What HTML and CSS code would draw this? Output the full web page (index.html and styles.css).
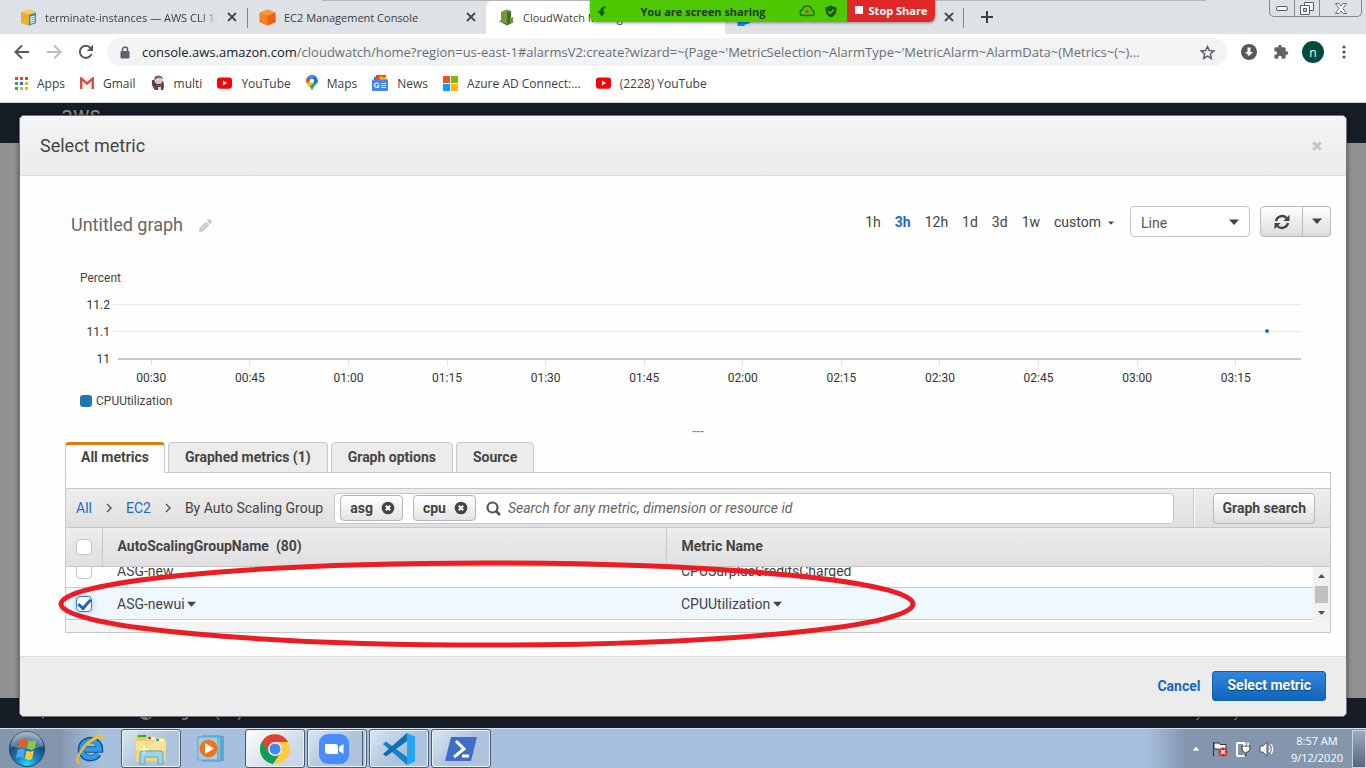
FILE: index.html
```html
<!DOCTYPE html>
<html lang="en">
<head>
<meta charset="utf-8">
<title>CloudWatch Management Console</title>
<link rel="stylesheet" href="styles.css">
</head>
<body>
<svg class="defs" aria-hidden="true">
  <symbol id="x" viewBox="0 0 10 10"><path d="M1 1l8 8M9 1l-8 8" stroke="#45494d" stroke-width="1.8"/></symbol>
  <symbol id="yt" viewBox="0 0 16 12"><rect width="16" height="12" rx="3" fill="#f00"/><path d="M6.3 3.4v5.2L10.8 6z" fill="#fff"/></symbol>
  <symbol id="caret" viewBox="0 0 10 6"><path d="M0 .5h10L5 6z" fill="#444"/></symbol>
  <symbol id="remove" viewBox="0 0 14 14"><circle cx="7" cy="7" r="6.3" fill="#444"/><path d="M4.8 4.8l4.4 4.4M9.2 4.8L4.800 9.200" stroke="#fff" stroke-width="2"/></symbol>
</svg>

<header class="browser">
  <div class="tabstrip">
    <div class="tab">
      <svg class="fav" width="17" height="17" viewBox="0 0 17 17"><path d="M1 3l8-2.500L16 3v11l-7 2.500L1 14z" fill="#f2a32b"/><path d="M1 3l8 2v11.500L1 14z" fill="#e8b12e"/><path d="M1 3l8-2.500L16 3 9 5z" fill="#f9cf5a"/><path d="M9 6l7-2v10l-7 2.500z" fill="#2d8ac7"/><path d="M10.500 7.500l4-1v7l-4 1.200z" fill="#fff"/><path d="M11.300 9l2.400-.6M11.300 11l2.400-.6M11.300 13l2.400-.6" stroke="#2d8ac7"/></svg>
      <span class="tab-title fade">terminate-instances — AWS CLI 1.18</span>
      <button class="tab-close" aria-label="Close tab"><svg width="10" height="10"><use href="#x"/></svg></button>
    </div>
    <div class="tab tab-sep">
      <svg class="fav" width="17" height="17" viewBox="0 0 17 17"><path d="M8.500.5l8 3.200v9.600l-8 3.200-8-3.200V3.700z" fill="#f58220"/><path d="M.5 3.700l8-3.200 8 3.200-8 3z" fill="#fb9b2f"/><path d="M8.500 6.700l8-3v9.600l-8 3.200z" fill="#e8621b"/></svg>
      <span class="tab-title">EC2 Management Console</span>
      <button class="tab-close" aria-label="Close tab"><svg width="10" height="10"><use href="#x"/></svg></button>
    </div>
    <div class="tab tab-active">
      <svg class="fav" width="17" height="17" viewBox="0 0 17 17"><path d="M1 12l7-2 8 3-7 3.500z" fill="#4b6b2c"/><path d="M3 3l3-1.500L9 3v10l-3 1.500L3 13z" fill="#6d9a41"/><path d="M6 1.500L9 .5l4 1.500v11l-4 2-3-1.500z" fill="#759c3e"/><path d="M9 3l4-1v11l-4 2z" fill="#4b6b2c"/><path d="M12 9l3-.8v4.800l-3 1.200z" fill="#6d9a41"/></svg>
      <span class="tab-title">CloudWatch Management Console</span>
    </div>
    <div class="tab tab-last">
      <svg class="fav" width="17" height="17" viewBox="0 0 17 17"><path d="M8.500 3a5.500 5.500 0 1 1-1 11M2 13h4v3H2z" fill="none" stroke="#0a84ff" stroke-width="3"/></svg>
      <span class="tab-title"></span>
      <button class="tab-close" aria-label="Close tab"><svg width="10" height="10"><use href="#x"/></svg></button>
    </div>
    <button class="new-tab" aria-label="New tab"><svg width="12" height="12" viewBox="0 0 12 12"><path d="M6 0v12M0 6h12" stroke="#3c4043" stroke-width="2"/></svg></button>
    <div class="caption">
      <button aria-label="Minimize"><svg width="12" height="5" viewBox="0 0 12 5"><rect x=".5" y=".5" width="11" height="4" rx="1.500" fill="#fff" stroke="#5a5d61"/></svg></button>
      <button aria-label="Restore"><svg width="14" height="13" viewBox="0 0 14 13"><path d="M4.500.5h9v8h-9z" fill="#fff" stroke="#5a5d61"/><path d="M.5 3.500h9v9h-9z" fill="#fff" stroke="#5a5d61"/><path d="M3.500 6.500h3v3h-3z" fill="#ccc" stroke="#5a5d61"/></svg></button>
      <button class="cap-close" aria-label="Close"><svg width="12" height="11" viewBox="0 0 12 11"><path d="M.5.500h3.500l2 2.500 2-2.500h3.500l-3.500 5 3.500 5H8L6 8l-2 2.500H.5l3.500-5z" fill="#fff" stroke="#6a6d71"/></svg></button>
    </div>
    <div class="share-edge"></div>
    <div class="share">
      <div class="share-main">
        <svg width="10" height="11" viewBox="0 0 10 11"><path d="M9.500.5C5 .5 3 2.500 3.500 5H.5L5 10.500 8 6H6.500C6 3.500 7 2 9.500.5z" fill="#0b5a0b"/></svg>
        <span>You are screen sharing</span>
        <svg class="cloud" width="16" height="12" viewBox="0 0 16 12"><path d="M3.500 10.500a2.800 2.800 0 0 1-.3-5.500C3.700 2.500 5.500 1 8 1s4.300 1.500 4.700 3.800c3.500.7 3.300 5.700 0 5.700z" fill="none" stroke="#1c6b14" stroke-width="1.300"/><circle cx="8" cy="6.500" r="1.700" fill="#e33b2a"/></svg>
        <svg width="12" height="13" viewBox="0 0 12 13"><path d="M6 .5l5.500 2c.3 4.500-1 8-5.500 10C1.500 10.500.2 7 .5 2.500z" fill="#1d5a17"/><path d="M3.300 6.300l2 2 3.500-3.800" fill="none" stroke="#4ec800" stroke-width="1.500"/></svg>
      </div>
      <button class="share-stop"><i></i>Stop Share</button>
    </div>
  </div>

  <div class="toolbar">
    <button aria-label="Back"><svg width="16" height="16" viewBox="0 0 16 16"><path d="M15 8H2M8 1.500L1.500 8 8 14.500" fill="none" stroke="#55585c" stroke-width="2"/></svg></button>
    <button aria-label="Forward"><svg width="16" height="16" viewBox="0 0 16 16"><path d="M1 8h13M8 1.500L14.500 8 8 14.500" fill="none" stroke="#babcbe" stroke-width="2"/></svg></button>
    <button aria-label="Reload"><svg width="16" height="16" viewBox="0 0 16 16"><path d="M13.500 10A6 6 0 1 1 12.500 4" fill="none" stroke="#55585c" stroke-width="2"/><path d="M15 .8V7H8.800z" fill="#55585c"/></svg></button>
    <div class="omnibox">
      <svg width="10" height="13" viewBox="0 0 10 13"><path d="M2.500 6V3.500a2.500 2.500 0 0 1 5 0V6" fill="none" stroke="#5f6368" stroke-width="1.500"/><rect x=".5" y="5" width="9" height="7.500" rx="1" fill="#5f6368"/></svg>
      <span class="url"><b>console.aws.amazon.com</b>/cloudwatch/home?region=us-east-1#alarmsV2:create?wizard=~(Page~'MetricSelection~AlarmType~'MetricAlarm~AlarmData~(Metrics~(~)...</span>
      <button aria-label="Bookmark this tab"><svg width="15" height="15" viewBox="0 0 15 15"><path d="M7.500 1.500l1.800 4.100 4.500.4-3.400 3 1 4.400-3.900-2.300-3.900 2.300 1-4.400-3.400-3 4.500-.4z" fill="none" stroke="#5f6368" stroke-width="1.500"/></svg></button>
    </div>
    <button aria-label="Downloads"><svg width="16" height="16" viewBox="0 0 16 16"><circle cx="8" cy="8" r="8" fill="#55585c"/><path d="M6.500 3.500h3V8H12l-4 4-4-4h2.500z" fill="#fff"/></svg></button>
    <button aria-label="Extensions"><svg width="16" height="16" viewBox="0 0 24 24"><path d="M20.500 11H19V7a2 2 0 0 0-2-2h-4V3.500a2.500 2.500 0 0 0-5 0V5H4a2 2 0 0 0-2 2v3.800h1.500a2.700 2.700 0 0 1 0 5.400H2V20c0 1.100.9 2 2 2h3.800v-1.500a2.700 2.700 0 0 1 5.400 0V22H17a2 2 0 0 0 2-2v-4h1.500a2.500 2.500 0 0 0 0-5z" fill="#5f6368"/></svg></button>
    <button class="avatar">n</button>
    <button aria-label="Menu"><svg width="4" height="14" viewBox="0 0 4 14"><g fill="#55585c"><circle cx="2" cy="2" r="1.600"/><circle cx="2" cy="7" r="1.600"/><circle cx="2" cy="12" r="1.600"/></g></svg></button>
  </div>

  <nav class="bookmarks">
    <a href="#"><svg width="13" height="13" viewBox="0 0 13 13"><path d="M0 0h3v3H0zM5 0h3v3H5zM10 0h3v3h-3z" fill="#ea4335"/><path d="M0 5h3v3H0zM0 10h3v3H0z" fill="#34a853"/><path d="M5 5h3v3H5z" fill="#1a73e8"/><path d="M10 5h3v3h-3zM5 10h3v3H5zM10 10h3v3h-3z" fill="#fbaf05"/></svg>Apps</a>
    <a href="#"><svg width="14" height="12" viewBox="0 0 14 12"><path d="M0 0h14v12H0z" fill="#eceff1"/><path d="M1.200 12V1.500L7 6.500l5.800-5V12" fill="none" stroke="#db4437" stroke-width="2.300"/></svg>Gmail</a>
    <a href="#"><svg width="14" height="16" viewBox="0 0 14 16"><path d="M1 5Q0 11 4 15h8q2-4 0-9z" fill="#3b4a5c"/><circle cx="7.500" cy="5" r="4" fill="#ecc9a8"/><path d="M3 5Q3 .5 7.500.5 12 1 12 4 8 1.500 5 4z" fill="#736458"/><path d="M6 9l2 1.500 2.500-1.500v3L8 11l-2 1z" fill="#d33833"/><path d="M3 10l3 4-4-1z" fill="#d33833"/><path d="M7 12h3v3H7z" fill="#ddd"/></svg>multi</a>
    <a href="#"><svg width="15" height="12"><use href="#yt"/></svg>YouTube</a>
    <a href="#"><svg width="12" height="16" viewBox="0 0 12 16"><path d="M6 0a5.700 5.700 0 0 1 5.700 5.700C11.700 9.500 7 11 6 16 5 11 .3 9.500.3 5.700A5.700 5.700 0 0 1 6 0z" fill="#34a853"/><path d="M1.600 2L6 5.700.9 8.500Q-.6 4.500 1.600 2z" fill="#ea4335"/><path d="M1.600 2Q5-1.600 9 .9L4 7z" fill="#4285f4"/><path d="M.9 8.500L5 4l3 4-5 4z" fill="#fbbc04"/><path d="M9 .9q4 3 2.300 7L8 8 6 4z" fill="#1a73e8"/><circle cx="6" cy="5.700" r="2" fill="#fff"/></svg>Maps</a>
    <a href="#"><svg width="16" height="16" viewBox="0 0 16 16"><path d="M2 2h9v5H2z" fill="#0c9d58"/><path d="M4 0h10l-1 5H3z" fill="#ea4335"/><path d="M8 1l7 2v4H7z" fill="#fbbc04"/><rect y="4.500" width="16" height="11.500" rx="1" fill="#4285f4"/><path d="M6.800 9a2.300 2.300 0 1 0 .3 1.800H5M9.500 8.500H14M9.500 10.500H14M9.500 12.500H14" fill="none" stroke="#fff" stroke-width="1.100"/></svg>News</a>
    <a href="#"><svg width="15" height="15" viewBox="0 0 15 15"><path d="M0 0h7v7H0z" fill="#f25022"/><path d="M8 0h7v7H8z" fill="#7fba00"/><path d="M0 8h7v7H0z" fill="#00a4ef"/><path d="M8 8h7v7H8z" fill="#ffb900"/></svg>Azure AD Connect:...</a>
    <a href="#"><svg width="15" height="12"><use href="#yt"/></svg>(2228) YouTube</a>
  </nav>
</header>

<main class="page">
  <div class="backdrop">
    <div class="aws-bar"><span>aws</span></div>
    <div class="aws-body"></div>
    <div class="aws-foot">
      <svg width="13" height="16" viewBox="0 0 13 16"><path d="M0 0h12v15L6 11H0z" fill="#7b7f85"/></svg>
      <svg class="globe" width="16" height="18" viewBox="0 0 16 18"><circle cx="8" cy="9.500" r="7.500" fill="#858a8f"/><path d="M8 12l6-2-4 6z" fill="#161d27"/></svg>
      <span>English (US)</span>
      <span class="foot-right">Privacy Policy</span>
    </div>
  </div>

  <section class="dialog" role="dialog" aria-labelledby="dlg-title">
    <div class="dialog-head">
      <h1 id="dlg-title">Select metric</h1>
      <button aria-label="Close dialog"><svg width="10" height="10" viewBox="0 0 10 10"><path d="M1.300 1.300l7.400 7.400M8.700 1.300L1.300 8.700" stroke="#c6c6c6" stroke-width="3.200"/></svg></button>
    </div>

    <div class="dialog-body">
      <div class="graph-bar">
        <h2>Untitled graph</h2>
        <button class="edit" aria-label="Rename graph"><svg width="13" height="13" viewBox="0 0 13 13"><path d="M0 13l.6-4L7 2.700 10.300 6 4 12.400zM7.800 1.900L9.200.5q.9-.8 1.800 0L12.500 2q.8.900 0 1.800l-1.400 1.400z" fill="#c9c9c9"/><path d="M3.200 9.800l5-5" stroke="#e4e4e4"/></svg></button>
        <div class="ranges">
          <button>1h</button><button class="on">3h</button><button>12h</button><button>1d</button><button>3d</button><button>1w</button><button>custom <svg width="6" height="4"><use href="#caret"/></svg></button>
        </div>
        <div class="select-wrap">
          <select aria-label="Graph type"><option>Line</option></select>
          <svg width="10" height="6"><use href="#caret"/></svg>
        </div>
        <div class="split">
          <button aria-label="Refresh"><svg width="16" height="16" viewBox="0 0 16 16"><path d="M2 7a6.200 6.200 0 0 1 10.500-3M14 9a6.200 6.200 0 0 1-10.500 3" fill="none" stroke="#444" stroke-width="2.400"/><path d="M15.500.8V7H9.300zM.5 15.200V9h6.200z" fill="#444"/></svg></button>
          <button aria-label="Refresh options"><svg width="10" height="6"><use href="#caret"/></svg></button>
        </div>
      </div>

      <div class="chart">
        <div class="unit">Percent</div>
        <div class="plot">
          <div class="grid-row"><span>11.2</span><i></i></div>
          <div class="grid-row"><span>11.1</span><i><b class="point"></b></i></div>
          <div class="grid-row axis"><span>11</span><i></i></div>
        </div>
        <div class="xaxis"><span>00:30</span><span>00:45</span><span>01:00</span><span>01:15</span><span>01:30</span><span>01:45</span><span>02:00</span><span>02:15</span><span>02:30</span><span>02:45</span><span>03:00</span><span>03:15</span></div>
        <div class="legend"><i></i>CPUUtilization</div>
      </div>
      <div class="handle">---</div>

      <div class="tabs" role="tablist">
        <button class="on" role="tab" aria-selected="true">All metrics</button><button role="tab">Graphed metrics (1)</button><button role="tab">Graph options</button><button role="tab">Source</button>
      </div>

      <div class="panel">
        <div class="filter">
          <nav class="crumbs"><a href="#">All</a><svg width="6" height="10" viewBox="0 0 6 10"><path d="M1 1l4 4-4 4" fill="none" stroke="#555" stroke-width="1.400"/></svg><a href="#">EC2</a><svg width="6" height="10" viewBox="0 0 6 10"><path d="M1 1l4 4-4 4" fill="none" stroke="#555" stroke-width="1.400"/></svg><span>By Auto Scaling Group</span></nav>
          <div class="search">
            <button class="chip">asg <svg width="14" height="14"><use href="#remove"/></svg></button>
            <button class="chip">cpu <svg width="14" height="14"><use href="#remove"/></svg></button>
            <svg width="15" height="15" viewBox="0 0 15 15"><circle cx="6.500" cy="6.500" r="5" fill="none" stroke="#555" stroke-width="2.200"/><path d="M10 10l4 4" stroke="#555" stroke-width="2.600"/></svg>
            <input type="text" aria-label="Search metrics" placeholder="Search for any metric, dimension or resource id">
          </div>
          <div class="filter-end"><button class="btn">Graph search</button></div>
        </div>
        <table class="metrics metrics-head">
          <tr><th class="c-check"><input type="checkbox" aria-label="Select all"></th><th class="c-name">AutoScalingGroupName&nbsp; (80)</th><th>Metric Name</th></tr>
        </table>
        <div class="rows">
          <div class="viewport">
            <table class="metrics">
              <tr><td class="c-check"><input type="checkbox" aria-label="ASG-new"></td><td class="c-name">ASG-new</td><td>CPUSurplusCreditsCharged</td></tr>
              <tr class="picked"><td class="c-check"><input type="checkbox" checked aria-label="ASG-newui"></td><td class="c-name">ASG-newui <svg width="9" height="6"><use href="#caret"/></svg></td><td>CPUUtilization <svg width="9" height="6"><use href="#caret"/></svg></td></tr>
            </table>
          </div>
          <div class="scrollbar"><svg width="7" height="4" viewBox="0 0 7 4"><path d="M0 4h7L3.500 0z" fill="#505050"/></svg><i></i><svg width="7" height="4" viewBox="0 0 7 4"><path d="M0 0h7L3.500 4z" fill="#505050"/></svg></div>
        </div>
        <div class="panel-foot"></div>
        <svg class="marker" width="860" height="90" viewBox="0 0 860 90"><ellipse cx="430" cy="45" rx="426" ry="41" fill="none" stroke="#ed1c24" stroke-width="5"/></svg>
      </div>
    </div>

    <div class="dialog-foot">
      <button class="link">Cancel</button>
      <button class="primary">Select metric</button>
    </div>
  </section>
</main>

<footer class="taskbar">
  <button class="start" aria-label="Start"><svg width="38" height="38" viewBox="0 0 38 38"><defs><radialGradient id="orb" cx=".5" cy=".95" r=".9"><stop offset="0" stop-color="#19e0ff"/><stop offset=".35" stop-color="#1583bd"/><stop offset=".7" stop-color="#1b4d78"/><stop offset="1" stop-color="#7d9db8"/></radialGradient></defs><circle cx="19" cy="19" r="17.500" fill="url(#orb)" stroke="#24425f"/><path d="M3 16a16 15 0 0 1 32 0q-16 6-32 0z" fill="#fff" opacity=".25"/><path d="M12 10q4-3 7-.5L17.500 18q-4-2-7.500.5z" fill="#ee5a24"/><path d="M20.500 10q4 2.500 8 0L26.500 19q-4 2-7.500-.5z" fill="#8cc63e"/><path d="M9.500 20q4-2.500 7.500 0L15.500 28q-4-2-7.500.5z" fill="#48a9e6"/><path d="M18.500 20.500q4 2 7.500 0L24 29q-4 2-7-.5z" fill="#fcc732"/></svg></button>
  <button class="pin" aria-label="Internet Explorer"><svg width="34" height="34" viewBox="0 0 34 34"><path d="M25.500 22A9.500 9 0 1 1 27 17.500H12" fill="none" stroke="#164f94" stroke-width="6.500"/><path d="M25 22A9 8.500 0 1 1 26.500 17.500H12" fill="none" stroke="#2d9be6" stroke-width="4.500"/><path d="M8 31q-7 2-4-6Q9 12 20 5.500q9-5 11-2 1 2-1 5 0-4-5-2Q11 13 6 25q-2 5 2 6z" fill="#f4bd2e"/></svg></button>
  <button class="task" aria-label="File Explorer"><svg width="34" height="32" viewBox="0 0 34 32"><path d="M2 2h12l2 3h16v23H2z" fill="#e6cd68"/><path d="M4 2h8v2H4z" fill="#19b33c"/><path d="M13 4h8v3h-8z" fill="#f8f2d8"/><path d="M14 4h3v2h-3z" fill="#d33"/><path d="M21 6h9v3h-9z" fill="#fff"/><path d="M22 6h3v2h-3z" fill="#1aa0e8"/><path d="M2 8h30v20H2z" fill="#f7e391"/><path d="M2 17h30v11H2z" fill="#f0d677"/><path d="M6 31V21q0-3 3-3h17q3 0 3 3v10h-5v-7H11v7z" fill="#9bd3ee" stroke="#5fa8cd"/><path d="M10 12v9M5.500 16.500h9" stroke="#fff"/></svg></button>
  <button class="pin pin-media" aria-label="Media Player"><svg width="30" height="28" viewBox="0 0 30 28"><path d="M8 1h19v25H8z" fill="#5ea9cf"/><path d="M5 1h19v25H5z" fill="#7fc0df" stroke="#4a98c2"/><path d="M1 2h20v23H1z" fill="#9fd0e8" stroke="#5ba5cc"/><circle cx="11.500" cy="13.500" r="9" fill="#f2731c"/><path d="M8 8l9 5.500L8 19z" fill="#fff"/></svg></button>
  <button class="task lit" aria-label="Chrome"><svg width="30" height="30" viewBox="0 0 30 30"><circle cx="15" cy="15" r="15" fill="#ffcd40"/><path d="M15 15L2 7.500A15 15 0 0 0 13 29.900L21 18z" fill="#0f9d58"/><path d="M2 7.500A15 15 0 0 1 28 8H15L8.500 18.500z" fill="#db4437"/><circle cx="15" cy="15" r="7" fill="#f1f1f1"/><circle cx="15" cy="15" r="5.500" fill="#4285f4"/></svg></button>
  <button class="task stack" aria-label="Zoom"><svg width="30" height="30" viewBox="0 0 30 30"><rect width="30" height="30" rx="9" fill="#4a8cff"/><path d="M6 10h10q3 0 3 3v7H9q-3 0-3-3zM20 13l4.500-3v10L20 17z" fill="#fff"/></svg></button>
  <button class="task" aria-label="Visual Studio Code"><svg width="32" height="32" viewBox="0 0 32 32"><path d="M0 11l3-2.500L24 24v8z" fill="#1283cc"/><path d="M0 21l3 2.500L24 8V0z" fill="#0d6fb5"/><path d="M24 0l8 3.500v25L24 32V0z" fill="#22a7f2"/></svg></button>
  <button class="task" aria-label="PowerShell"><svg width="32" height="24" viewBox="0 0 32 24"><path d="M6 0h26l-6 24H0z" fill="#3f6ec9"/><path d="M11 4l8 8-10 8M17 19h7" fill="none" stroke="#fff" stroke-width="3"/></svg></button>
  <div class="tray">
    <svg width="8" height="5" viewBox="0 0 8 5"><path d="M0 5h8L4 0z" fill="#fff" stroke="#53627a" stroke-width=".5"/></svg>
    <svg width="16" height="16" viewBox="0 0 16 16"><path d="M1.500 1v14.500M2 2h5l1 1.500h6v6H8L7 8H2z" fill="#fff" stroke="#333" stroke-width="1"/><circle cx="11" cy="11" r="4.500" fill="#d92b20"/><path d="M9 9l4 4M13 9l-4 4" stroke="#fff" stroke-width="1.500"/></svg>
    <svg width="15" height="16" viewBox="0 0 15 16"><rect x="1" y="2" width="8" height="13" rx="1" fill="#8694ab" stroke="#fff" stroke-width="2"/><path d="M6 5h8v3q0 3-4 3.500V15H9v-3.500Q6 11 6 8z" fill="#fff" stroke="#333"/><path d="M8 5V1.500M12 5V1.500" stroke="#fff" stroke-width="1.500"/></svg>
    <svg width="16" height="16" viewBox="0 0 16 16"><path d="M1 5h3l4-4v14l-4-4H1z" fill="#fff" stroke="#555"/><path d="M10 5q2 3 0 6M12 3q3.500 5 0 10" fill="none" stroke="#fff" stroke-width="1.200"/></svg>
    <div class="clock">8:57 AM<br>9/12/2020</div>
    <button class="desktop" aria-label="Show desktop"></button>
  </div>
</footer>
</body>
</html>
```
FILE: styles.css
```css
* { box-sizing: border-box; }
body { margin: 0; min-height: 100vh; display: flex; flex-direction: column; font-family: Roboto, sans-serif; font-size: 14px; color: #444; }
button { font: inherit; color: inherit; border: 0; background: none; padding: 0; display: inline-flex; align-items: center; justify-content: center; white-space: nowrap; }
svg { flex: none; }
a { text-decoration: none; color: inherit; }
h1, h2 { margin: 0; font-weight: 400; font-size: 18px; }
.defs { position: absolute; width: 0; height: 0; }

/* Browser window */
.browser { font-family: "Open Sans", "Noto Sans", sans-serif; font-size: 12px; background: #fff; border-bottom: 1px solid #d5d7da; color: #3c4043; }
.tabstrip { position: relative; display: flex; height: 34px; padding-left: 8px; background: #dee1e6; }
.tab { flex: 0 1 239px; min-width: 0; display: flex; align-items: center; gap: 8px; padding: 0 10px 0 12px; font-size: 11px; }
.tab-sep { background: linear-gradient(#85888c, #85888c) 0 8px / 1px 20px no-repeat; }
.tab-active { background: #fff; border-radius: 8px 8px 0 0; }
.tab-last { border-radius: 0 0 0 8px; background: linear-gradient(#85888c, #85888c) 100% 8px / 1px 20px no-repeat; }
.tab-title { flex: 1; overflow: hidden; white-space: nowrap; }
.fade { -webkit-mask-image: linear-gradient(90deg, #000 90%, transparent); mask-image: linear-gradient(90deg, #000 90%, transparent); }
.new-tab { width: 46px; }
.caption { margin: 0 4px 0 auto; height: 17px; display: flex; border: 1px solid #85888c; border-top: 0; border-radius: 0 0 5px 5px; }
.caption button { width: 25px; border-right: 1px solid #85888c; }
.caption .cap-close { width: 41px; border-right: 0; }
.share-edge { position: absolute; top: 0; left: 322px; right: 160px; height: 1px; background: #b4b6ba; }
.share { position: absolute; top: 0; left: 590px; width: 345px; height: 22px; display: flex; border-radius: 0 0 6px 6px; overflow: hidden; box-shadow: 0 1px 3px rgba(0,0,0,.4); font-size: 11px; font-weight: 700; }
.share-main { flex: 1; background: #4ec800; color: #243824; display: flex; align-items: center; gap: 10px; padding: 0 10px 0 7px; }
.share-main span { flex: 1; text-align: center; }
.share-stop { width: 88px; background: #e02828; color: #fff; gap: 6px; padding-bottom: 2px; }
.share-stop i { width: 8px; height: 8px; background: #fff; }

.toolbar { display: flex; align-items: center; gap: 16px; padding: 4px 20px 0 14px; height: 32px; }
.omnibox { flex: 1; min-width: 0; height: 28px; display: flex; align-items: center; gap: 12px; padding: 0 12px 0 13px; border-radius: 14px; background: #f1f3f4; margin: 0 -2px 0 -3px; }
.url { flex: 1; min-width: 0; overflow: hidden; white-space: nowrap; font-size: 13px; color: #6a6e73; }
.url b { font-weight: 400; color: #202124; }
.avatar { width: 22px; height: 22px; border-radius: 50%; background: #004d40; color: #fff; margin: 0 2px 0 -3px; }
.bookmarks { display: flex; align-items: center; gap: 15px; height: 36px; padding: 0 15px 2px; white-space: nowrap; }
.bookmarks a { display: flex; align-items: center; gap: 9px; }

/* Page behind the dialog */
.page { flex: 1; display: grid; }
.page > * { grid-area: 1 / 1; }
.backdrop { display: flex; flex-direction: column; }
.aws-bar { height: 40px; background: #161d27; padding: 0 61px; font-size: 22px; line-height: 24px; color: #8b8e92; overflow: hidden; }
.aws-body { flex: 1; background: #919191; }
.aws-foot { height: 30px; background: #161d27; color: #858a8f; display: flex; align-items: center; padding: 0 126px 2px 32px; font-weight: 700; }
.aws-foot .globe { margin: 0 11px 0 93px; }
.foot-right { margin-left: auto; font-size: 13px; font-weight: 400; }

/* Dialog */
.dialog { margin: 12px 19px 11px; border: 1px solid #777; border-radius: 5px; background: #fefefe; display: flex; flex-direction: column; box-shadow: 0 0 5px rgba(0,0,0,.5); position: relative; }
.dialog-head { height: 60px; display: flex; align-items: center; justify-content: space-between; padding: 0 24px 0 20px; border-bottom: 1px solid #ddd; border-radius: 5px 5px 0 0; background: linear-gradient(#f5f5f5, #ebebeb); }
.dialog-body { flex: 1; padding: 30px 15px 22px 45px; }
.dialog-foot { height: 60px; border-top: 1px solid #ddd; border-radius: 0 0 5px 5px; background: #ececec; display: flex; align-items: center; justify-content: flex-end; gap: 12px; padding: 0 20px 2px; font-weight: 700; }
.link { color: #1766bb; }
.primary { height: 30px; padding: 0 14px 2px; border: 1px solid #1160ae; border-radius: 3px; background: linear-gradient(#2f86dd, #1166bb); color: #fff; text-shadow: 0 1px 1px #073a70; }

.graph-bar { display: flex; align-items: center; height: 31px; padding-left: 6px; }
.graph-bar h2 { color: #666; padding-top: 6px; }
.edit { margin: 8px auto 0 16px; }
.ranges { display: flex; gap: 14px; margin-right: 16px; }
.ranges .on { color: #1a6cc4; font-weight: 700; }
.ranges svg { margin: 2px 0 0 7px; }
.select-wrap { position: relative; width: 120px; height: 31px; margin-right: 10px; }
select { appearance: none; width: 100%; height: 100%; padding: 3px 10px 0; border: 1px solid #c4c4c4; border-radius: 4px; background: #fff; font: inherit; color: #555; }
.select-wrap svg { position: absolute; right: 11px; top: 13px; pointer-events: none; }
.split { display: flex; height: 31px; width: 71px; border: 1px solid #b9b9b9; border-radius: 4px; background: linear-gradient(#fff, #dcdcdc); }
.split button:first-child { flex: 1; border-right: 1px solid #b9b9b9; }
.split button:last-child { width: 27px; padding-bottom: 2px; }

.chart { padding: 33px 30px 0 15px; font-size: 12px; }
.unit { line-height: 16px; }
.plot { padding-top: 5px; }
.grid-row { display: flex; align-items: center; height: 27px; color: #333; }
.grid-row span { width: 30px; text-align: right; }
.grid-row i { position: relative; flex: 1; height: 1px; margin-left: 3px; background: #eaeaea; }
.axis { height: 28px; }
.axis i { height: 2px; margin-left: 8px; background: #c8c8c8; }
.point { position: absolute; left: 97%; top: -2px; width: 4px; height: 4px; border-radius: 50%; background: #1f77b4; }
.xaxis { display: grid; grid-template-columns: repeat(12, 1fr); margin: -13px 16px 0 22px; text-align: center; color: #333; line-height: 16px; }
.xaxis span { padding-top: 10px; background: linear-gradient(#e2e2e2, #e2e2e2) 50% 0 / 1px 6px no-repeat; }
.legend { display: flex; align-items: center; gap: 4px; margin-top: 7px; line-height: 16px; }
.legend i { width: 12px; height: 12px; border-radius: 3px; background: #1f77b4; }
.handle { text-align: center; font-size: 14px; line-height: 16px; color: #888; margin: 14px 0 3px; }

.tabs { display: flex; gap: 3px; position: relative; z-index: 1; margin-bottom: -1px; }
.tabs button { height: 31px; padding: 0 16px 1px; border: 1px solid #c8c8c8; border-radius: 4px 4px 0 0; background: #ececec; font-weight: 700; }
.tabs .on { border-top: 3px solid #e47911; border-bottom-color: #fefefe; background: #fefefe; padding: 0 15px 3px; }

.panel { position: relative; border: 1px solid #c8c8c8; padding-top: 15px; }
.filter { display: flex; align-items: center; height: 40px; border: solid #c8c8c8; border-width: 1px 0; background: linear-gradient(#ededed, #dfdfdf); padding-left: 10px; }
.crumbs { display: flex; align-items: center; gap: 14px; white-space: nowrap; }
.crumbs a { color: #1a6cc4; }
.search { flex: 1; min-width: 0; height: 31px; margin: 0 19px 0 11px; padding: 0 5px; display: flex; align-items: center; border: 1px solid #c8c8c8; border-radius: 4px; background: #fff; }
.chip { height: 26px; padding: 0 7px 0 9px; gap: 8px; margin-right: 10px; border: 1px solid #b5b5b5; border-radius: 4px; background: linear-gradient(#fff, #e4e4e4); font-weight: 700; }
.search input { flex: 1; min-width: 0; border: 0; outline: 0; padding: 0 7px; font: inherit; background: none; }
.search input::placeholder { color: #666; font-style: italic; }
.filter-end { align-self: stretch; display: flex; align-items: center; border-left: 1px solid #c8c8c8; box-shadow: inset 1px 0 #fff; padding: 0 15px 0 19px; }
.btn { height: 31px; padding: 0 8px; border: 1px solid #b9b9b9; border-radius: 4px; background: linear-gradient(#fff, #e0e0e0); font-weight: 700; }

.metrics { width: 100%; border-collapse: collapse; table-layout: fixed; text-align: left; }
.metrics th, .metrics td { padding: 0 15px; white-space: nowrap; }
.metrics td { height: 32px; border-bottom: 1px solid #c8ccd0; }
.metrics-head { height: 39px; background: linear-gradient(#ededed, #dfdfdf); border-bottom: 1px solid #c8c8c8; }
.metrics-head th { padding-bottom: 2px; }
.metrics-head th + th { border-left: 1px solid #c8c8c8; }
.metrics .c-check { width: 36px; padding: 0 0 0 10px; line-height: 0; }
.metrics .c-name { width: 564px; }
.metrics svg { vertical-align: 2px; margin-left: -1px; }
.picked { background: #eff7ff; }
input[type=checkbox] { appearance: none; width: 16px; height: 16px; margin: 0; border: 1px solid #c4c4c4; border-radius: 4px; background: #fff; vertical-align: middle; }
input[type=checkbox]:checked { border-color: #2a7de1; box-shadow: 0 0 6px #9cc8f5; display: inline-grid; place-items: center; }
input[type=checkbox]:checked::before { content: ""; width: 10px; height: 5px; border: solid #1a66bb; border-width: 0 0 3px 3px; transform: translateY(-1px) rotate(-48deg); }
.rows { display: flex; height: 55px; }
.viewport { flex: 1; min-width: 0; display: flex; flex-direction: column; justify-content: flex-end; overflow: hidden; padding-bottom: 2px; }
.scrollbar { width: 17px; background: #f1f1f1; display: flex; flex-direction: column; align-items: center; justify-content: space-between; padding: 7px 0; }
.scrollbar i { width: 13px; height: 17px; background: #c1c1c1; }
.panel-foot { height: 10px; background: #f4f4f4; }
.marker { position: absolute; left: -9px; bottom: -17px; pointer-events: none; }

/* Taskbar */
.taskbar { display: flex; align-items: center; height: 40px; border-top: 1px solid #d3dfec; padding-left: 8px; background: linear-gradient(90deg, #8496ae 0, #8496ae 60px, #a7c0dd 100px, #a7c0dd calc(100% - 220px), #8496ae calc(100% - 180px), #8496ae); font-family: "Open Sans", sans-serif; font-size: 11px; }
.pin { margin-left: 27px; width: 34px; }
.pin-media { margin: 0 16px 0 14px; }
.task { width: 60px; height: 39px; border: 1px solid #4a5a70; border-radius: 3px; box-shadow: inset 0 0 0 1px #e8f0f8; background: linear-gradient(135deg, #dbe6f2, #aec3dd 55%); }
.pin + .task { margin-left: 14px; }
.pin-media + .task { margin-left: 0; }
.task + .task { margin-left: 2px; }
.lit { background: linear-gradient(135deg, #fff, #cbd8e8 70%); }
.stack { padding-right: 6px; background: linear-gradient(#4a5a70, #4a5a70) 54px 0 / 1px 100% no-repeat, linear-gradient(135deg, #dbe6f2, #aec3dd 55%); }
.tray { margin-left: auto; height: 100%; display: flex; align-items: center; gap: 8px; color: #fff; }
.tray > svg:first-child { margin-right: 4px; }
.clock { text-align: center; line-height: 17px; margin: 0 1px 0 8px; }
.desktop { width: 14px; height: 38px; border: 1px solid #c6d2e0; background: linear-gradient(#9aa9bd, #58677d); }
```
